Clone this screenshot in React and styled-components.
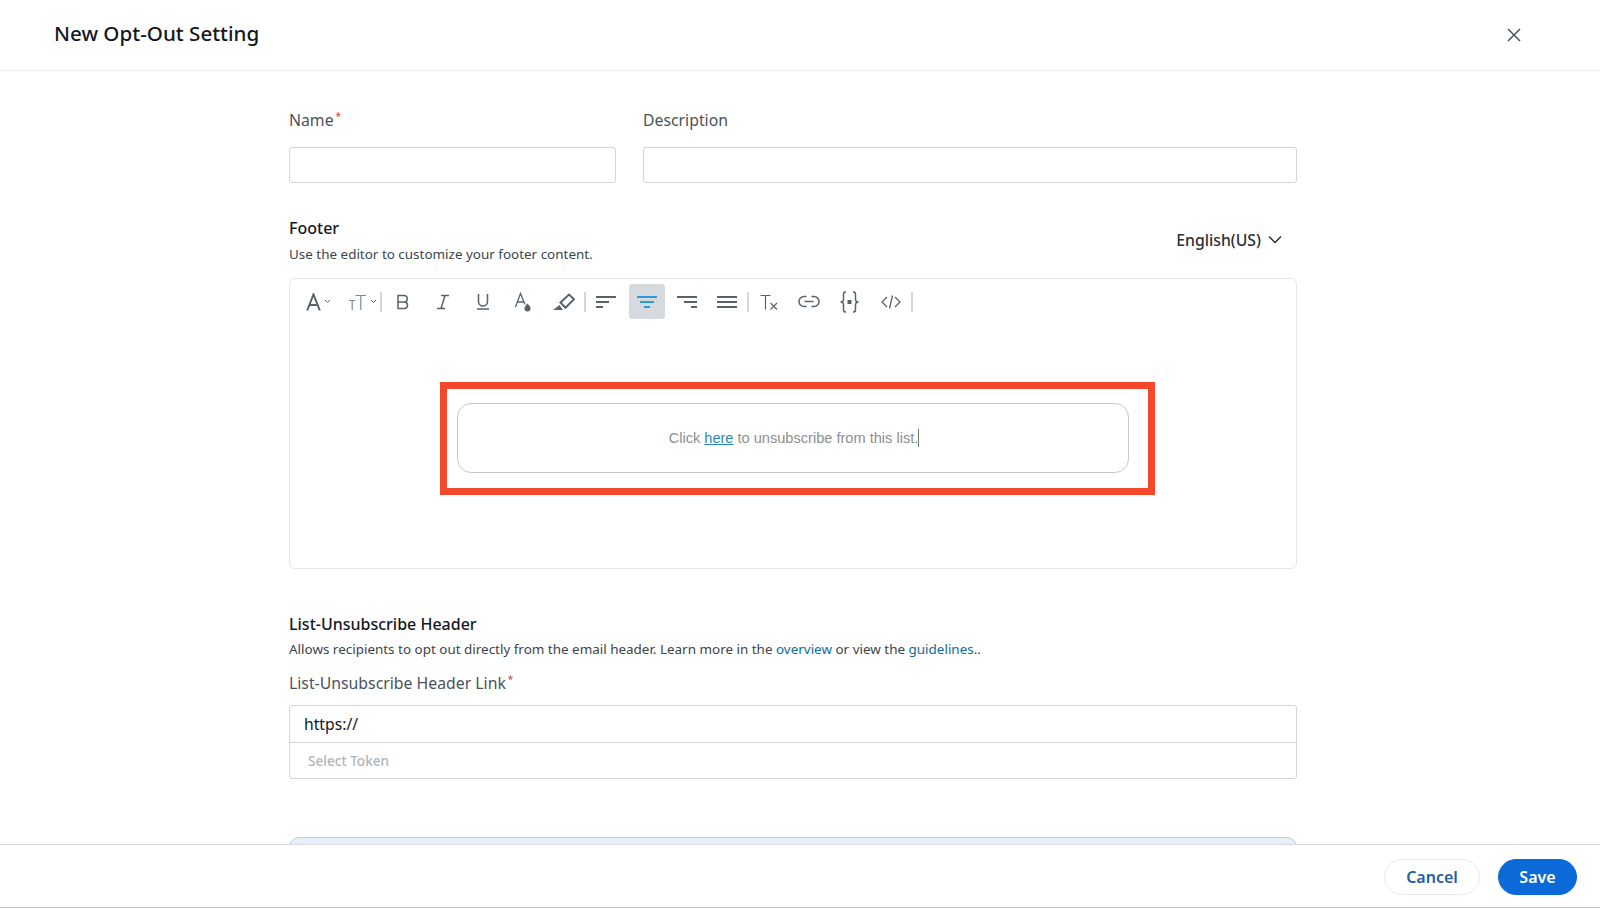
import React from 'react';
import styled, { createGlobalStyle } from 'styled-components';

const GlobalStyle = createGlobalStyle`
  html, body, #root {
    margin: 0;
    height: 100%;
  }
  body {
    background: #fff;
    font-family: "Noto Sans", "Open Sans", sans-serif;
    overflow: hidden;
  }
  * {
    box-sizing: border-box;
  }
`;

const Page = styled.div`
  display: flex;
  flex-direction: column;
  height: 908px;
  width: 1600px;
  border-bottom: 1px solid #c4c4c4;
`;

const Header = styled.header`
  flex: 0 0 71px;
  display: flex;
  align-items: center;
  justify-content: space-between;
  padding: 0 78px 5px 54px;
  border-bottom: 1px solid #ececec;
`;

const Title = styled.h1`
  margin: 0;
  font-size: 20.6px;
  line-height: 28px;
  font-weight: 500;
  color: #14181d;
`;

const CloseButton = styled.button`
  display: flex;
  padding: 0;
  border: 0;
  background: none;
  color: #4a5560;
  margin-top: 5px;
`;

const Body = styled.main`
  flex: 1;
  min-height: 0;
  overflow: hidden;
  padding: 38px 303px 0 289px;
`;

const FieldRow = styled.div`
  display: grid;
  grid-template-columns: 327px 654px;
  column-gap: 27px;
`;

const Label = styled.label`
  display: block;
  font-size: 15.8px;
  line-height: 22px;
  color: #4a525b;
  margin-bottom: ${(p) => p.$gap || 16}px;
`;

const Star = styled.sup`
  color: #d8453a;
  font-size: 10px;
  line-height: 0;
  margin-left: 2px;
`;

const TextInput = styled.input`
  display: block;
  width: 100%;
  height: 36px;
  border: 1px solid #d3d5d8;
  border-radius: 3px;
  background: #fff;
  outline: none;
`;

const FooterHead = styled.div`
  display: flex;
  justify-content: space-between;
  align-items: center;
  margin-top: 35px;
  padding-right: 15px;
`;

const SectionTitle = styled.h2`
  margin: 0;
  font-size: 16px;
  line-height: 20px;
  font-weight: 500;
  color: #14181d;
`;

const Hint = styled.p`
  margin: ${(p) => p.$top}px 0 0;
  font-size: 13.45px;
  line-height: 20px;
  color: #3c444c;
`;

const HintLink = styled.a`
  color: #0f6a9c;
  text-decoration: none;
`;

const LangSelect = styled.div`
  display: flex;
  align-items: center;
  gap: 7px;
  font-size: 15.8px;
  font-weight: 500;
  color: #2a3036;
  margin-bottom: 3px;
`;

const Editor = styled.section`
  margin-top: 14px;
  height: 291px;
  border: 1px solid #e6e7e9;
  border-radius: 6px;
`;

const Toolbar = styled.div`
  display: flex;
  align-items: center;
  height: 35px;
  margin-top: 5px;
  padding-left: 8px;
  color: #5a6269;
`;

const ToolButton = styled.span`
  flex: 0 0 ${(p) => p.$width || 40}px;
  height: 35px;
  display: flex;
  align-items: center;
  justify-content: center;
  gap: 3px;
  ${(p) => p.$active && `
    background: #d6d9dd;
    border-radius: 3px;
    color: #2c9ae0;
    flex-basis: 36px;
    margin: 0 2px 0 3px;
  `}
`;

const FontSizeButton = styled(ToolButton)`
  padding-left: 5px;
`;

const FontSizeIcon = styled.span`
  display: flex;
  color: #7d8a93;
`;

const Separator = styled.i`
  flex: 0 0 2px;
  height: 20px;
  margin-right: ${(p) => p.$after || 0}px;
  background: #d4d7da;
`;

const Snapshot = styled.div`
  width: 715px;
  height: 113px;
  margin: 63px 0 0 150px;
  padding: 14px 19px 15px 10px;
  border: 7px solid #f5482a;
`;

const SnapshotBox = styled.div`
  height: 70px;
  display: flex;
  align-items: center;
  justify-content: center;
  border: 1px solid #c9c9c9;
  border-radius: 14px;
  font-family: "Liberation Sans", Arial, sans-serif;
  font-size: 14.6px;
  color: #8b8f93;
  padding-left: 2px;
`;

const SnapshotLink = styled.a`
  color: #2b8ab5;
  text-decoration: underline;
  margin: 0 4px;
`;

const Caret = styled.i`
  display: inline-block;
  width: 1px;
  height: 18px;
  background: #777;
`;

const HeaderSection = styled.div`
  margin-top: 45px;
`;

const LinkLabel = styled(Label)`
  margin-top: 13px;
`;

const TokenField = styled.div`
  border: 1px solid #d3d5d8;
  border-radius: 3px;
`;

const TokenInput = styled.input`
  display: block;
  width: 100%;
  height: 37px;
  padding: 0 14px;
  border: 0;
  border-bottom: 1px solid #d3d5d8;
  outline: none;
  background: none;
  font: 400 15.7px "Noto Sans", sans-serif;
  color: #14181d;
`;

const TokenSelect = styled.div`
  height: 35px;
  padding-left: 18px;
  display: flex;
  align-items: center;
  font-size: 13.6px;
  font-weight: 500;
  color: #b1b5ba;
`;

const InfoCard = styled.div`
  height: 60px;
  margin-top: 58px;
  background: #e6eefa;
  border: 1px solid #bcd0e8;
  border-radius: 10px;
`;

const Footer = styled.footer`
  flex: 0 0 63px;
  display: flex;
  align-items: center;
  justify-content: flex-end;
  gap: 18px;
  padding: 1px 23px 0 0;
  border-top: 1px solid #d9d9d9;
  background: #fff;
`;

const Button = styled.button`
  height: 36px;
  width: ${(p) => p.$width}px;
  border-radius: 18px;
  font: 600 16px "Noto Sans", sans-serif;
  border: 1px solid ${(p) => (p.$primary ? '#0b69d8' : '#e8e9eb')};
  background: ${(p) => (p.$primary ? '#0b69d8' : '#fff')};
  color: ${(p) => (p.$primary ? '#fff' : '#1f5fa8')};
`;

const Svg = ({ w = 20, h = 20, children }) => (
  <svg width={w} height={h} viewBox={`0 0 ${w} ${h}`} fill="none" stroke="currentColor" strokeWidth="1.5">
    {children}
  </svg>
);

const MiniChevron = () => (
  <Svg w={7} h={5}><path d="M1 1l2.500 2.500L6 1" strokeWidth="1" /></Svg>
);

const LeftLines = () => (
  <Svg w={22} h={16}><path d="M1 3h20M1 8h13M1 13h7" strokeWidth="2" /></Svg>
);
const CenterLines = () => (
  <Svg w={22} h={16}><path d="M1 3h20M4 8h14M8 13h6" strokeWidth="2" /></Svg>
);
const RightLines = () => (
  <Svg w={22} h={16}><path d="M1 3h20M8 8h13M15 13h6" strokeWidth="2" /></Svg>
);
const JustifyLines = () => (
  <Svg w={22} h={16}><path d="M1 3h20M1 8h20M1 13h20" strokeWidth="2" /></Svg>
);

export default function App() {
  return (
    <Page>
      <GlobalStyle />
      <Header>
        <Title>New Opt-Out Setting</Title>
        <CloseButton aria-label="Close">
          <Svg w={16} h={16}><path d="M2 2l12 12M14 2L2 14" /></Svg>
        </CloseButton>
      </Header>

      <Body>
        <FieldRow>
          <div>
            <Label>Name<Star>*</Star></Label>
            <TextInput />
          </div>
          <div>
            <Label>Description</Label>
            <TextInput />
          </div>
        </FieldRow>

        <FooterHead>
          <div>
            <SectionTitle>Footer</SectionTitle>
            <Hint $top={6}>Use the editor to customize your footer content.</Hint>
          </div>
          <LangSelect>
            English(US)
            <Svg w={14} h={9}><path d="M1 1.500l6 6 6-6" /></Svg>
          </LangSelect>
        </FooterHead>

        <Editor>
          <Toolbar>
            <ToolButton $width={41}>
              <Svg w={15} h={18}><path d="M1.200 17.500L7.500 1.500l6.300 16M3.500 12h8" strokeWidth="2" /></Svg>
              <MiniChevron />
            </ToolButton>
            <FontSizeButton $width={41}>
              <FontSizeIcon>
                <Svg w={19} h={18}>
                  <path d="M1 7.500h6.500M4.200 7.500V17M7.500 2.500h10.500M12.800 2.500V17" strokeWidth="1.200" />
                </Svg>
              </FontSizeIcon>
              <MiniChevron />
            </FontSizeButton>
            <Separator $after={1} />
            <ToolButton>
              <Svg w={14} h={16}>
                <path d="M2 1.500h6a3.200 3.200 0 010 6.500H2zM2 8h6.800a3.300 3.300 0 010 6.500H2z" />
              </Svg>
            </ToolButton>
            <ToolButton>
              <Svg w={14} h={16}><path d="M5 1.500h8M1 14.500h8M9 1.500L5 14.500" /></Svg>
            </ToolButton>
            <ToolButton>
              <Svg w={14} h={17}><path d="M2.500 1v7.500a4.500 4.500 0 009 0V1M1 16h12" /></Svg>
            </ToolButton>
            <ToolButton>
              <Svg w={18} h={20}>
                <path d="M1.500 15L6.500 1.500 11 12.500M3.500 10h6" strokeWidth="1.300" />
                <path d="M13.500 11.500c-2 2.300-3 3.500-3 4.900a3 3 0 006 0c0-1.400-1-2.600-3-4.900z" fill="currentColor" stroke="none" />
              </Svg>
            </ToolButton>
            <ToolButton $width={41}>
              <Svg w={22} h={18}>
                <path d="M7.500 9.500l8.500-8 5 4.700-8.500 8.500z" strokeWidth="2" />
                <path d="M0 17l6.500-5 3.500 5z" fill="currentColor" stroke="none" />
              </Svg>
            </ToolButton>
            <Separator />
            <ToolButton><LeftLines /></ToolButton>
            <ToolButton $active><CenterLines /></ToolButton>
            <ToolButton><RightLines /></ToolButton>
            <ToolButton><JustifyLines /></ToolButton>
            <Separator />
            <ToolButton>
              <Svg w={18} h={16}><path d="M0.500 1.500h10M5.500 1.500V15.500M10.500 9l6.500 6.500M17 9l-6.500 6.500" strokeWidth="1.200" /></Svg>
            </ToolButton>
            <ToolButton>
              <Svg w={22} h={13}>
                <path d="M8.500 1.500H6a5 5 0 000 10h2.500M13.500 1.500H16a5 5 0 010 10h-2.500M6.500 6.500h9" />
              </Svg>
            </ToolButton>
            <ToolButton $width={41}>
              <Svg w={19} h={22}>
                <path d="M6 1H5.200C3.700 1 3.500 2.300 3.500 3.500v5c0 1.200-.8 2-2 2.500 1.200.5 2 1.300 2 2.500v5c0 1.200.2 2.500 1.700 2.500H6M13 1h.8c1.500 0 1.700 1.300 1.700 2.500v5c0 1.200.8 2 2 2.500-1.200.5-2 1.300-2 2.500v5c0 1.200-.2 2.500-1.700 2.500H13" strokeWidth="1.500" />
                <path d="M7.500 9h4v4h-4z" fill="currentColor" stroke="none" />
              </Svg>
            </ToolButton>
            <ToolButton $width={41}>
              <Svg w={20} h={14}>
                <path d="M6 2L1 7l5 5M14 2l5 5-5 5M11.500 0.500L8.500 13.500" strokeWidth="1.300" />
              </Svg>
            </ToolButton>
            <Separator />
          </Toolbar>

          <Snapshot>
            <SnapshotBox>
              Click <SnapshotLink>here</SnapshotLink> to unsubscribe from this list.<Caret />
            </SnapshotBox>
          </Snapshot>
        </Editor>

        <HeaderSection>
          <SectionTitle>List-Unsubscribe Header</SectionTitle>
          <Hint $top={5}>
            Allows recipients to opt out directly from the email header. Learn more in the{' '}
            <HintLink>overview</HintLink> or view the <HintLink>guidelines</HintLink>..
          </Hint>
          <LinkLabel $gap={11}>List-Unsubscribe Header Link<Star>*</Star></LinkLabel>
          <TokenField>
            <TokenInput defaultValue="https://" />
            <TokenSelect>Select Token</TokenSelect>
          </TokenField>
        </HeaderSection>

        <InfoCard />
      </Body>

      <Footer>
        <Button $width={96}>Cancel</Button>
        <Button $primary $width={79}>Save</Button>
      </Footer>
    </Page>
  );
}
